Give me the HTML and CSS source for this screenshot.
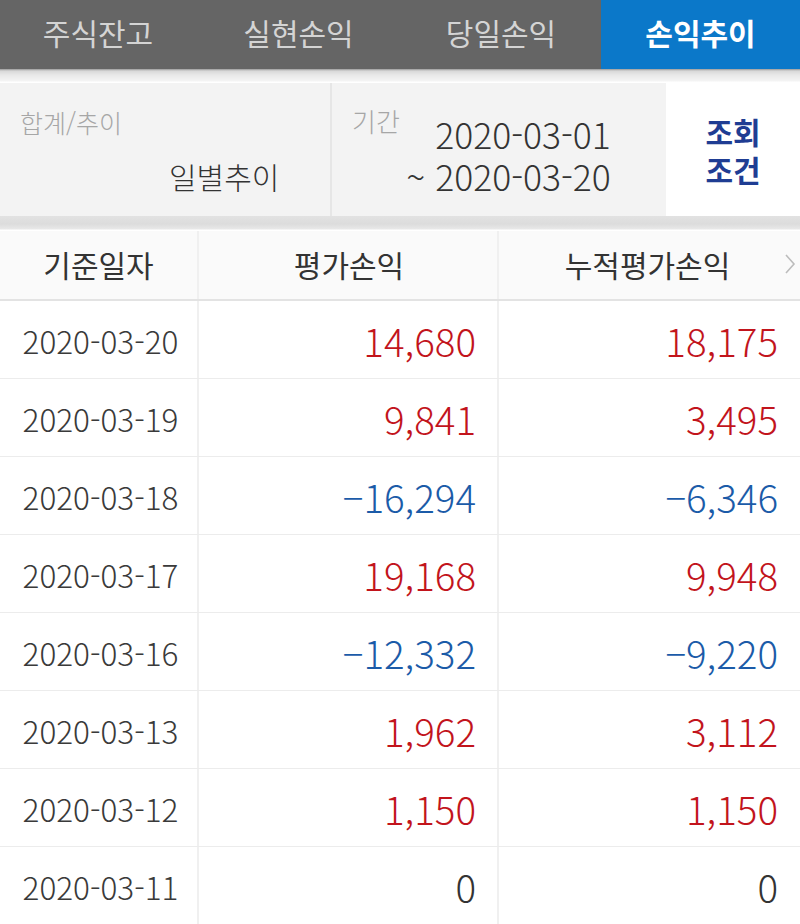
FILE: index.html
```html
<!DOCTYPE html>
<html lang="ko">
<head>
<meta charset="utf-8">
<link rel="stylesheet" href="styles.css">
</head>
<body>
<div class="tabs">
  <div class="tab">주식잔고</div>
  <div class="tab">실현손익</div>
  <div class="tab">당일손익</div>
  <div class="tab active">손익추이</div>
</div>
<div class="gap-top"></div>
<div class="filter">
  <div class="fbox fsum">
    <div class="flabel">합계/추이</div>
    <div class="fvalue">일별추이</div>
  </div>
  <div class="fbox fperiod">
    <div class="flabel">기간</div>
    <div class="dates">
      <div>2020-03-01</div>
      <div>~ 2020-03-20</div>
    </div>
  </div>
  <div class="fbtn"><span>조회</span><span>조건</span></div>
</div>
<div class="gap-bottom"></div>
<div class="table">
  <div class="row head">
    <div class="c c1">기준일자</div>
    <div class="c c2">평가손익</div>
    <div class="c c3">누적평가손익<svg class="chev" width="12" height="20" viewBox="0 0 12 20"><polyline points="2,1 10,10 2,19" fill="none" stroke="#bcbcbc" stroke-width="1.6"/></svg></div>
  </div>
  <div class="row"><div class="c c1">2020-03-20</div><div class="c c2 num up">14,680</div><div class="c c3 num up">18,175</div></div>
  <div class="row"><div class="c c1">2020-03-19</div><div class="c c2 num up">9,841</div><div class="c c3 num up">3,495</div></div>
  <div class="row"><div class="c c1">2020-03-18</div><div class="c c2 num down">−16,294</div><div class="c c3 num down">−6,346</div></div>
  <div class="row"><div class="c c1">2020-03-17</div><div class="c c2 num up">19,168</div><div class="c c3 num up">9,948</div></div>
  <div class="row"><div class="c c1">2020-03-16</div><div class="c c2 num down">−12,332</div><div class="c c3 num down">−9,220</div></div>
  <div class="row"><div class="c c1">2020-03-13</div><div class="c c2 num up">1,962</div><div class="c c3 num up">3,112</div></div>
  <div class="row"><div class="c c1">2020-03-12</div><div class="c c2 num up">1,150</div><div class="c c3 num up">1,150</div></div>
  <div class="row"><div class="c c1">2020-03-11</div><div class="c c2 num">0</div><div class="c c3 num">0</div></div>
</div>
</body>
</html>
```

FILE: styles.css
```css
* { box-sizing: border-box; }
html, body {
  margin: 0;
  padding: 0;
  background: #ffffff;
  width: 800px;
  height: 924px;
  overflow: hidden;
  font-family: "Noto Sans CJK KR", "Noto Sans", sans-serif;
  font-weight: 300;
  color: #333333;
}
.tabs {
  display: flex;
  height: 69px;
  background: #656565;
}
.tab {
  width: 200px;
  display: flex;
  align-items: center;
  justify-content: center;
  font-size: 30px;
  font-weight: 400;
  color: #d4d4d4;
  padding-bottom: 6px;
}
.tab:nth-child(1) { width: 196px; }
.tab:nth-child(2) { width: 205px; }
.tab.active {
  width: 199px;
  background: #0b78c9;
  color: #ffffff;
  font-weight: bold;
}
.gap-top {
  height: 14px;
  background: linear-gradient(#9a9a9a 0, #d8d8d8 2px, #e8e8e8 6px, #f4f4f4 12px, #ffffff 13px);
}
.filter {
  display: flex;
  height: 133px;
  background: #f3f3f3;
}
.fbox {
  height: 100%;
}
.fsum {
  width: 332px;
  border-right: 2px solid #e6e6e6;
  padding: 24px 0 0 20px;
}
.flabel {
  font-size: 25px;
  color: #a6a6a6;
  line-height: 1.2;
}
.fvalue {
  font-size: 30px;
  color: #333333;
  margin: 21px 0 0 149px;
  line-height: 1.2;
}
.fperiod {
  width: 334px;
  display: flex;
  padding: 22px 0 0 20px;
}
.fperiod .flabel { font-size: 26px; }
.dates {
  font-size: 35.5px;
  line-height: 42px;
  color: #333333;
  text-align: right;
  width: 211px;
  margin-top: 8px;
}
.fbtn {
  flex: 1;
  background: #ffffff;
  display: flex;
  flex-direction: column;
  align-items: center;
  justify-content: center;
  text-align: center;
  font-size: 30px;
  font-weight: bold;
  line-height: 38px;
  color: #1f3d93;
  padding: 0 0 0 0;
}
.gap-bottom {
  height: 15px;
  background: linear-gradient(#e2e2e2 0, #dcdcdc 8px, #e8e8e8 13px, #ffffff 14px);
}
.table { background: #ffffff; }
.row {
  display: flex;
  height: 78px;
  border-bottom: 1px solid #ececec;
}
.row.head {
  height: 70px;
  background: #fafafa;
  border-bottom: 2px solid #e3e3e3;
}
.c {
  display: flex;
  align-items: center;
  font-size: 31.5px;
  height: 100%;
}
.c1 {
  width: 199px;
  justify-content: center;
  border-right: 2px solid #f0f0f0;
  color: #3a3a3a;
  padding-left: 4px;
}
.c2 {
  width: 300px;
  border-right: 2px solid #f0f0f0;
}
.c3 {
  flex: 1;
  position: relative;
}
.head .c { font-size: 30px; font-weight: 400; color: #333333; justify-content: center; padding-bottom: 2px; }
.head .c1 { padding-left: 0; }
.head .c2 { padding-left: 2px; }
.head .c3 { padding-right: 4px; }
.chev {
  position: absolute;
  right: 4px;
  top: 23px;
}
.num {
  justify-content: flex-end;
  font-size: 38.5px;
  color: #333333;
}
.c2.num { padding-right: 21px; }
.c3.num { padding-right: 22px; }
.up { color: #c2141c; }
.down { color: #1b5ba8; }
```
